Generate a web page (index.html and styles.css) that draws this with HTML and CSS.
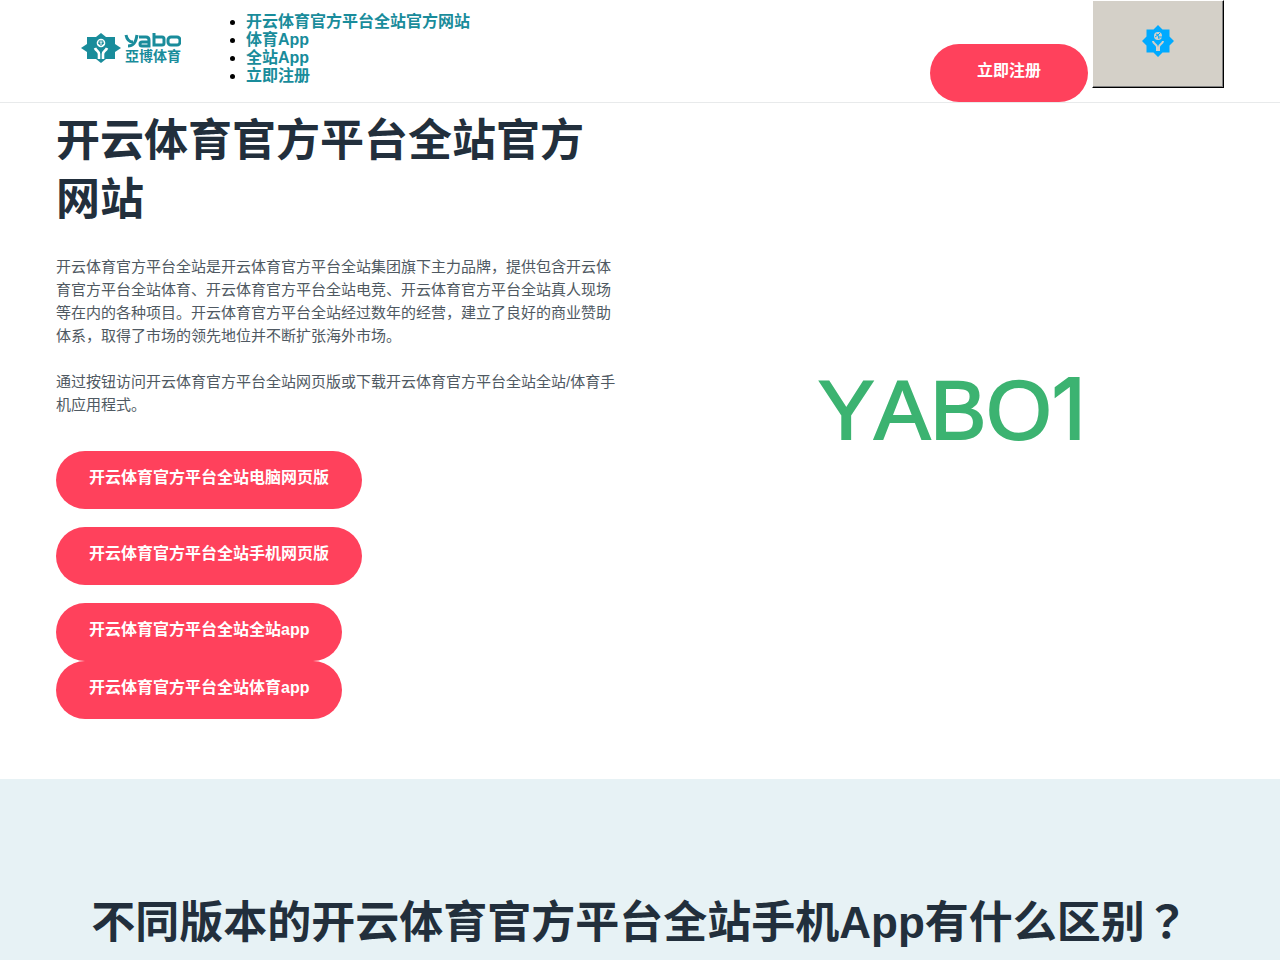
FILE: index.html
```html
<!DOCTYPE html>
<html lang="zh-CN">
<head>
    <meta charset="utf-8">
    <meta name="viewport" content="width=device-width, initial-scale=1">
    <title>开云体育官方平台全站官方网站</title>
    <link rel="stylesheet" href="styles.css">
</head>
<body>
<header class="header">
    <div class="container header-inner">
        <a href="#" class="logo" aria-label="yabo">
            <svg width="100" height="32" viewBox="0 0 100 32">
                <path d="M20 0l5 4h9v7l6 4-6 4v7h-9l-5 4-5-4H6v-7l-6-4 6-4V4h9z" fill="#198c9b"/>
                <circle cx="20" cy="10" r="4.300" fill="#fff"/>
                <path d="M18 7.500l4 0 1 3-3 2.500-3-2.500z" fill="#198c9b"/>
                <path d="M18.500 9h3M20 9v3" stroke="#fff"/>
                <path d="M14 15c1 3 4 3 4 6v5M26 15c-1 3-4 3-4 6v5" fill="none" stroke="#fff" stroke-width="2.600"/>
                <g fill="none" stroke="#198c9b" stroke-width="3">
                    <path d="M45 2c1 5 3 7 7 7M56 2c-1 7-3 11-9 11"/>
                    <path d="M58 4h7q3 0 3 3v6h-7q-2 0-2-2t2-2h7"/>
                    <path d="M73 0v12h8q2 0 2-2V6q0-2-2-2h-8"/>
                    <rect x="87" y="4" width="12" height="8" rx="3"/>
                </g>
                <text x="44" y="28" class="logo-text">亞博体育</text>
            </svg>
        </a>
        <ul class="menu">
            <li><a href="#">开云体育官方平台全站官方网站</a></li>
            <li><a href="#">体育App</a></li>
            <li><a href="#">全站App</a></li>
            <li><a href="#">立即注册</a></li>
        </ul>
        <div class="header-btns">
            <a href="#" class="btn btn-reg">立即注册</a>
            <button type="button" class="toggle" aria-label="menu">
                <svg width="32" height="32" viewBox="0 0 32 32">
                    <path d="M16 0l4.500 4.500H27.500V11.500L32 16l-4.500 4.500v7h-7L16 32l-4.500-4.500h-7v-7L0 16l4.500-4.500v-7h7z" fill="#00aaff"/>
                    <circle cx="16" cy="11" r="4" fill="#d4d0c8"/>
                    <path d="M14 9l2 1 2-2M13 12l3-2 1 4M17 12h3" fill="none" stroke="#00aaff"/>
                    <path d="M11 16c0 3 4 3 4 6v4M21 16c0 3-4 3-4 6v4" fill="none" stroke="#d4d0c8" stroke-width="2"/>
                </svg>
            </button>
        </div>
    </div>
</header>

<section class="container banner">
    <div class="banner-text">
        <h1>开云体育官方平台全站官方网站</h1>
        <p>开云体育官方平台全站是开云体育官方平台全站集团旗下主力品牌，提供包含开云体育官方平台全站体育、开云体育官方平台全站电竞、开云体育官方平台全站真人现场等在内的各种项目。开云体育官方平台全站经过数年的经营，建立了良好的商业赞助体系，取得了市场的领先地位并不断扩张海外市场。</p>
        <p>通过按钮访问开云体育官方平台全站网页版或下载开云体育官方平台全站全站/体育手机应用程式。</p>
        <div class="btns">
            <a href="#" class="btn btn-gap">开云体育官方平台全站电脑网页版</a>
            <a href="#" class="btn btn-gap">开云体育官方平台全站手机网页版</a>
            <a href="#" class="btn">开云体育官方平台全站全站app</a>
            <a href="#" class="btn">开云体育官方平台全站体育app</a>
        </div>
    </div>
    <div class="banner-img">YABO<span class="one">1</span></div>
</section>

<section class="diff">
    <div class="container">
        <h2>不同版本的开云体育官方平台全站手机App有什么区别<span class="mark" lang="zh-TW">？</span></h2>
    </div>
</section>
</body>
</html>
```
FILE: styles.css
```css
*{
    box-sizing:border-box;
}
body{
    margin:0;
    background:#fff;
    color:#000;
    font:16px/18px "Liberation Sans", "Noto Sans CJK SC", sans-serif;
}
a{
    text-decoration:none;
}
.container{
    padding:0 56px;
}
.header{
    border-bottom:1px solid #e8eaeb;
}
.header-inner{
    display:flex;
    align-items:flex-start;
}
.logo{
    padding:33px 25px 0;
}
.logo svg, .toggle svg{
    display:block;
}
.logo-text{
    font:bold 14px "Noto Sans CJK TC", sans-serif;
    fill:#198c9b;
}
.menu{
    margin:0;
    padding:13px 0 17px 40px;
}
.menu a{
    color:#198c9b;
    font-weight:bold;
}
.header-btns{
    display:flex;
    align-items:flex-start;
    gap:4px;
    margin-left:auto;
}
.btn{
    padding:18px 33px 22px;
    border-radius:29px;
    background:#ff415c;
    color:#fff;
    font-weight:bold;
}
.btn-reg{
    margin-top:44px;
    padding-left:47px;
    padding-right:47px;
}
.toggle{
    display:flex;
    align-items:center;
    justify-content:center;
    width:132px;
    height:88px;
    padding:0 0 6px;
    border:1px solid #fff;
    border-right-color:#000;
    border-bottom-color:#000;
    box-shadow:inset -1px -1px 0 #808080;
    background:#d4d0c8;
}
.banner{
    display:grid;
    grid-template-columns:1fr 1fr;
    gap:48px;
    align-items:center;
    padding-bottom:60px;
}
h1, h2{
    margin:0;
    color:#222f3c;
    font-size:44px;
    line-height:59px;
}
h1{
    padding-top:8px;
    margin-bottom:26px;
}
.banner-text p{
    margin:0 0 23px;
    color:#4f5962;
    font-size:15px;
    line-height:23px;
}
.btns{
    display:flex;
    flex-direction:column;
    align-items:flex-start;
    padding-top:12px;
}
.btn-gap{
    margin-bottom:18px;
}
.banner-img{
    padding:0 0 4px 16px;
    color:#3cb371;
    font-size:84px;
    line-height:96px;
    text-align:center;
    font-kerning:none;
    -webkit-text-stroke:2px #3cb371;
}
.one{
    font-family:Inter, sans-serif;
}
.diff{
    padding:111px 0 60px;
    background:#e7f2f5;
}
.diff h2{
    text-align:center;
}
.mark{
    font-family:"Noto Sans CJK TC", sans-serif;
}
```
